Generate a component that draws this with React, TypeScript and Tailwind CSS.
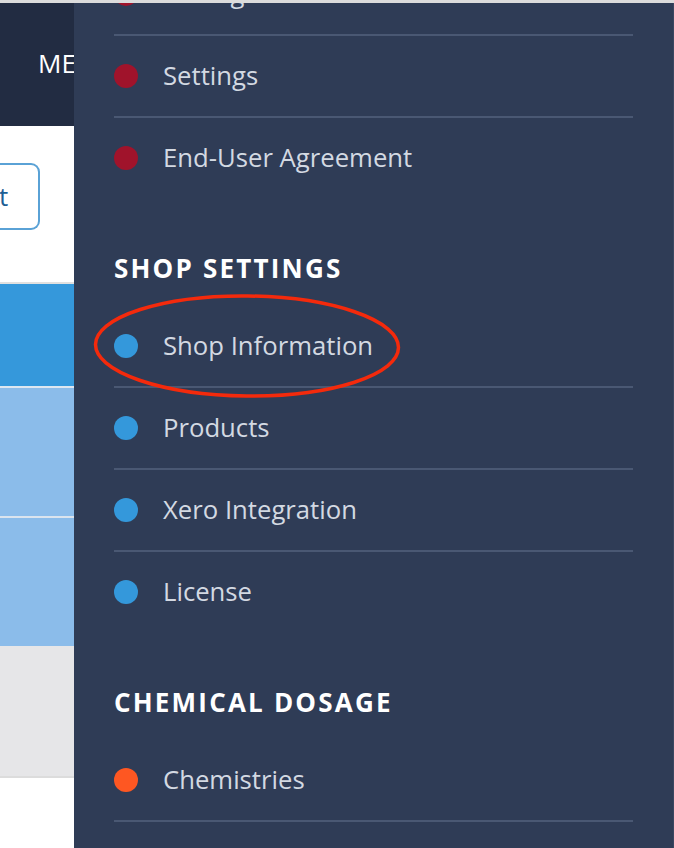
import React from "react";

type Item = { label: string; color: string; last?: boolean };

const Row = ({ label, color, last }: Item) => (
  <div
    className={
      "flex h-[82px] items-center " +
      (last ? "border-b-2 border-transparent" : "border-b-2 border-[#4a5873]")
    }
  >
    <span className="h-6 w-6 shrink-0 rounded-full" style={{ backgroundColor: color }} />
    <span className="ml-[25px] text-[25.7px] leading-none text-[#d3d9e2]">{label}</span>
  </div>
);

const Header = ({ children }: { children: React.ReactNode }) => (
  <div className="pt-[50px] pb-[20px] text-[26px] font-bold leading-[36px] tracking-[2.2px] text-white">
    {children}
  </div>
);

export default function App() {
  const red = "#a0132b";
  const blue = "#3498db";
  const orange = "#fe5722";
  return (
    <div
      className="relative flex h-[848px] w-[674px] flex-col overflow-hidden bg-white"
      style={{ fontFamily: '"Open Sans", "Noto Sans", sans-serif' }}
    >
      <div className="h-[3px] w-full shrink-0 bg-[#dcdcdc]" />
      <div className="flex min-h-0 flex-1">
        {/* left page remainder */}
        <div className="flex w-[74px] shrink-0 flex-col overflow-hidden">
          <div className="flex h-[123px] shrink-0 items-center bg-[#222c42] pl-[38px] pb-[3px] text-[26px] text-white">
            <span className="whitespace-nowrap">ME</span>
          </div>
          <div className="h-[156px] shrink-0 pt-[37px]">
            <div className="flex h-[67px] w-[40px] items-center rounded-r-[9px] border-2 border-l-0 border-[#5aa2d6] text-[26px] text-[#1d5e94]">
              <span className="-ml-[1px]">t</span>
            </div>
          </div>
          <div className="h-[2px] shrink-0 bg-[#e0e0e0]" />
          <div className="h-[102px] shrink-0 bg-[#3598db]" />
          <div className="h-[2px] shrink-0 bg-[#dde7f1]" />
          <div className="h-[128px] shrink-0 bg-[#8bbcea]" />
          <div className="h-[2px] shrink-0 bg-[#dbe4ee]" />
          <div className="h-[128px] shrink-0 bg-[#8bbcea]" />
          <div className="h-[130px] shrink-0 bg-[#e6e6e8]" />
          <div className="h-[2px] shrink-0 bg-[#dcdcdc]" />
          <div className="flex-1 bg-white" />
        </div>
        {/* drawer panel */}
        <div className="flex-1 overflow-hidden border-r border-[#3a4761] bg-[#2f3c56] px-[40px]">
          <div className="-mt-[49px]">
            <Row label="Manage Users" color={red} />
            <Row label="Settings" color={red} />
            <Row label="End-User Agreement" color={red} last />
            <Header>SHOP SETTINGS</Header>
            <Row label="Shop Information" color={blue} />
            <Row label="Products" color={blue} />
            <Row label="Xero Integration" color={blue} />
            <Row label="License" color={blue} last />
            <Header>CHEMICAL DOSAGE</Header>
            <Row label="Chemistries" color={orange} />
          </div>
        </div>
      </div>
      {/* red annotation ellipse */}
      <svg
        className="pointer-events-none absolute left-0 top-0"
        width="674"
        height="848"
        viewBox="0 0 674 848"
      >
        <ellipse
          cx="247"
          cy="346"
          rx="151.5"
          ry="50"
          fill="none"
          stroke="#f42a0c"
          strokeWidth="3.5"
          transform="rotate(0.6 247 346)"
        />
      </svg>
    </div>
  );
}
